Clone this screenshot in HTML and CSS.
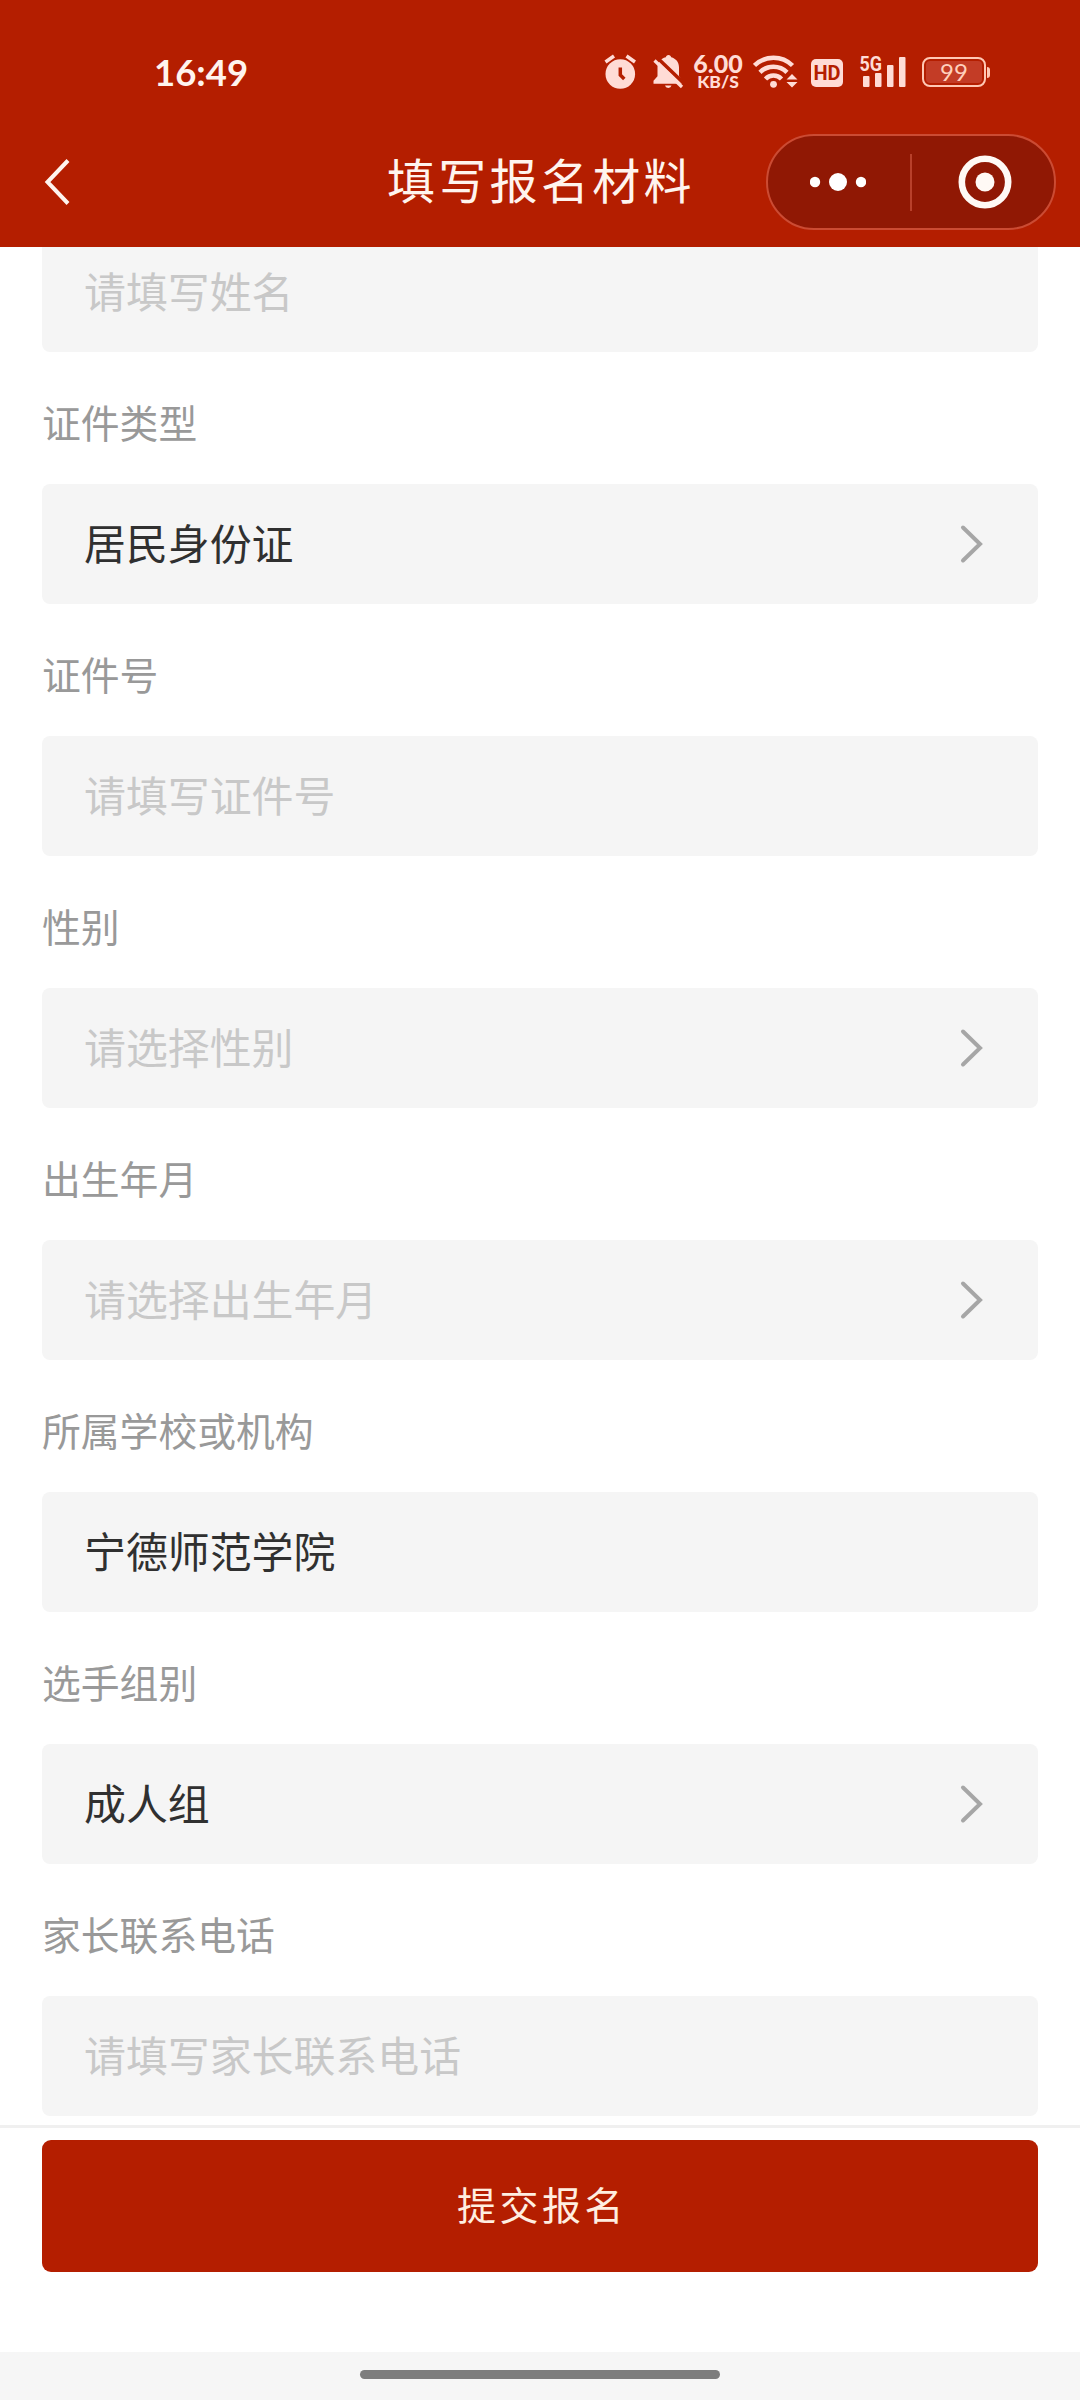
FILE: index.html
```
<!DOCTYPE html>
<html lang="zh-CN">
<head>
    <meta charset="UTF-8">
    <title>填写报名材料</title>
    <link rel="stylesheet" href="styles.css">
</head>
<body>
    <div class="page">
        <header class="header">
            <div class="status-bar">
                <span class="time">16:49</span>
                <div class="status-icons">
                    <!-- alarm -->
                    <svg class="alarm" width="32" height="40" viewBox="603 52 32 40">
                        <circle cx="619.3" cy="74" r="14.8" fill="#ffdcd6"/>
                        <path d="M604.5 62l8.5-6M634 62l-8.5-6" stroke="#ffdcd6" stroke-width="3.5" fill="none"/>
                        <path d="M619.3 67.5v7.5l4 4" stroke="#b41e00" stroke-width="3.5" fill="none"/>
                    </svg>
                    <!-- muted bell -->
                    <svg class="bell" width="32" height="40" viewBox="650 52 32 40">
                        <path d="M666.5 55c1.5 0 2.5 1 2.7 2.3 4.8 1.3 7.8 5 7.8 10v9l3.5 4.5v3h-29v-3l4-4.5v-9c0-5 3-8.7 8.3-10 .2-1.3 1.2-2.3 2.7-2.3z" fill="#ffdcd6"/>
                        <path d="M663 85.5h6.5a3.3 3 0 0 1-6.5 0z" fill="#ffdcd6"/>
                        <path d="M655 57.5l27 26" stroke="#b41e00" stroke-width="3.5"/>
                        <path d="M652.5 60.5l27.5 26.5" stroke="#ffdcd6" stroke-width="3.2"/>
                    </svg>
                    <div class="speed">
                        <span class="speed-value">6.00</span>
                        <span class="speed-unit">KB/S</span>
                    </div>
                    <!-- wifi -->
                    <svg class="wifi" width="46" height="40" viewBox="750 52 46 40">
                        <g fill="none" stroke="#ffdcd6" stroke-width="4.5">
                            <path d="M751.5 65.5a27 27 0 0 1 38 0"/>
                            <path d="M757 72.3a19 19 0 0 1 27 0"/>
                            <path d="M762.5 79a11 11 0 0 1 16 0"/>
                        </g>
                        <circle cx="770.5" cy="84.3" r="3.4" fill="#ffdcd6"/>
                        <path d="M783.5 79.5l5.5-5.5 5.5 5.5zM783.5 82l5.5 5.5 5.5-5.5z" fill="#ffdcd6"/>
                    </svg>
                    <span class="hd">HD</span>
                    <!-- 5G signal -->
                    <svg class="signal" width="48" height="40" viewBox="859 52 48 40">
                        <text x="859.5" y="70.5" class="signal-text" textLength="22.5" lengthAdjust="spacingAndGlyphs">5G</text>
                        <g fill="#ffdcd6">
                            <rect x="863" y="76" width="6.5" height="11" rx="1"/>
                            <rect x="875" y="73" width="6.5" height="14" rx="1"/>
                            <rect x="887" y="65" width="6.5" height="22" rx="1"/>
                            <rect x="899" y="57" width="6.5" height="30" rx="1"/>
                        </g>
                    </svg>
                    <div class="battery"><span>99</span></div>
                    <i class="battery-tip"></i>
                </div>
            </div>
            <div class="nav-bar">
                <svg class="back" width="30" height="48" viewBox="0 0 30 48">
                    <path d="M26 2.5L5.5 24 26 45.5" fill="none" stroke="#fff4ee" stroke-width="4"/>
                </svg>
                <h1>填写报名材料</h1>
                <div class="capsule">
                    <svg width="56" height="24" viewBox="0 0 56 24">
                        <g fill="#fff">
                            <circle cx="5" cy="12" r="5.2"/>
                            <circle cx="28" cy="12" r="9"/>
                            <circle cx="51" cy="12" r="5.2"/>
                        </g>
                    </svg>
                    <i class="divider"></i>
                    <svg width="54" height="54" viewBox="0 0 54 54">
                        <circle cx="27" cy="27" r="23.2" fill="none" stroke="#fff9f5" stroke-width="6.6"/>
                        <circle cx="27" cy="27" r="9.5" fill="#fff9f5"/>
                    </svg>
                </div>
            </div>
        </header>

        <main class="form">
            <div class="field placeholder">请填写姓名</div>

            <div class="label">证件类型</div>
            <div class="field">居民身份证
                <svg class="arrow" width="24" height="40" viewBox="0 0 24 40"><path d="M3 3.5L20 20 3 36.5"/></svg>
            </div>

            <div class="label">证件号</div>
            <div class="field placeholder">请填写证件号</div>

            <div class="label">性别</div>
            <div class="field placeholder">请选择性别
                <svg class="arrow" width="24" height="40" viewBox="0 0 24 40"><path d="M3 3.5L20 20 3 36.5"/></svg>
            </div>

            <div class="label">出生年月</div>
            <div class="field placeholder">请选择出生年月
                <svg class="arrow" width="24" height="40" viewBox="0 0 24 40"><path d="M3 3.5L20 20 3 36.5"/></svg>
            </div>

            <div class="label">所属学校或机构</div>
            <div class="field">宁德师范学院</div>

            <div class="label">选手组别</div>
            <div class="field">成人组
                <svg class="arrow" width="24" height="40" viewBox="0 0 24 40"><path d="M3 3.5L20 20 3 36.5"/></svg>
            </div>

            <div class="label">家长联系电话</div>
            <div class="field placeholder">请填写家长联系电话</div>
        </main>

        <footer class="footer">
            <button class="submit">提交报名</button>
        </footer>
        <div class="home-bar"><i></i></div>
    </div>
</body>
</html>
```
FILE: styles.css
```
* {
    box-sizing: border-box;
}
body {
    margin: 0;
    background-color: #fff;
    color: #303030;
    font-family: "Noto Sans CJK SC", sans-serif;
}
.page {
    width: 1080px;
    height: 2400px;
    display: flex;
    flex-direction: column;
    overflow: hidden;
}
svg {
    display: block;
    flex: none;
}

/* header */
.header {
    position: relative;
    z-index: 1;
    flex: none;
    height: 247px;
    background-color: #b41e00;
    color: #fff4ee;
}
.status-bar {
    height: 117px;
    padding: 27px 90px 0 154px;
    display: flex;
    justify-content: space-between;
    align-items: center;
    font-family: Lato, sans-serif;
}
.time {
    font-size: 36.5px;
    font-weight: 700;
    line-height: 40px;
}
.status-icons {
    display: flex;
    align-items: center;
    color: #ffdcd6;
}
.bell {
    margin-left: 16px;
}
.speed {
    width: 52px;
    margin-left: 8px;
    display: flex;
    flex-direction: column;
    align-items: center;
    font-weight: 900;
}
.speed-value {
    font-size: 25px;
    line-height: 20px;
}
.speed-unit {
    font-size: 17.5px;
    line-height: 18px;
}
.wifi {
    margin-left: 9px;
}
.hd {
    width: 32px;
    height: 28px;
    margin: 1px 0 0 12px;
    border-radius: 5px;
    background-color: #ffdcd6;
    color: #b41e00;
    font-family: Roboto, sans-serif;
    font-size: 20px;
    font-weight: 700;
    line-height: 28px;
    text-align: center;
}
.signal {
    margin-left: 16px;
}
.signal-text {
    fill: #ffdcd6;
    font-family: Roboto, sans-serif;
    font-size: 21px;
    font-weight: 700;
}
.battery {
    width: 64px;
    height: 30px;
    margin-left: 15px;
    padding: 2px;
    border: 2px solid #ffc8b4;
    border-radius: 8px;
}
.battery span {
    display: block;
    border-radius: 4px;
    background-color: #c33c26;
    color: #ffd0bc;
    font-size: 24px;
    line-height: 22px;
    text-align: center;
}
.battery-tip {
    width: 3px;
    height: 11px;
    margin-left: 1px;
    border-radius: 0 3px 3px 0;
    background-color: #ffc8b4;
}
.nav-bar {
    height: 130px;
    padding: 0 24px 0 42px;
    display: grid;
    grid-template-columns: 290px 1fr 290px;
    align-items: center;
}
.nav-bar h1 {
    margin: 0 0 9px;
    padding-left: 55px;
    font-size: 48px;
    font-weight: 400;
    line-height: 60px;
    letter-spacing: 3.3px;
    white-space: nowrap;
}
.capsule {
    height: 96px;
    padding: 0 42px;
    display: flex;
    justify-content: space-between;
    align-items: center;
    border: 2px solid #cb4b33;
    border-radius: 48px;
    background-color: #901804;
}
.divider {
    width: 2px;
    height: 57px;
    margin-right: 2px;
    background-color: #b8402b;
}

/* form */
.form {
    height: 1893px;
    flex: none;
    margin-top: -15px;
    padding: 0 42px;
}
.label {
    height: 132px;
    padding-top: 9px;
    color: #999;
    font-size: 38.8px;
    line-height: 120px;
}
.field {
    height: 120px;
    padding: 0 54px 5px 42px;
    display: flex;
    justify-content: space-between;
    align-items: center;
    border-radius: 8px;
    background-color: #f5f5f5;
    font-size: 41.9px;
}
.placeholder {
    color: #c8c8c8;
}
.arrow {
    margin-top: 5px;
}
.arrow path {
    fill: none;
    stroke: #a6a6a6;
    stroke-width: 4;
    stroke-linecap: round;
}

/* bottom */
.footer {
    flex: none;
    height: 227px;
    padding: 12px 42px 0;
    border-top: 3px solid #f0f0f0;
}
.submit {
    width: 100%;
    height: 132px;
    display: block;
    padding: 0 0 6px 4px;
    border: none;
    border-radius: 9px;
    background-color: #b41e00;
    color: #ffeee0;
    font-family: inherit;
    font-size: 39px;
    letter-spacing: 3.5px;
}
.home-bar {
    flex: 1;
    padding-top: 18px;
    background-color: #f6f6f6;
}
.home-bar i {
    display: block;
    width: 360px;
    height: 9px;
    margin: 0 auto;
    border-radius: 5px;
    background-color: #7d7d7d;
}
```
